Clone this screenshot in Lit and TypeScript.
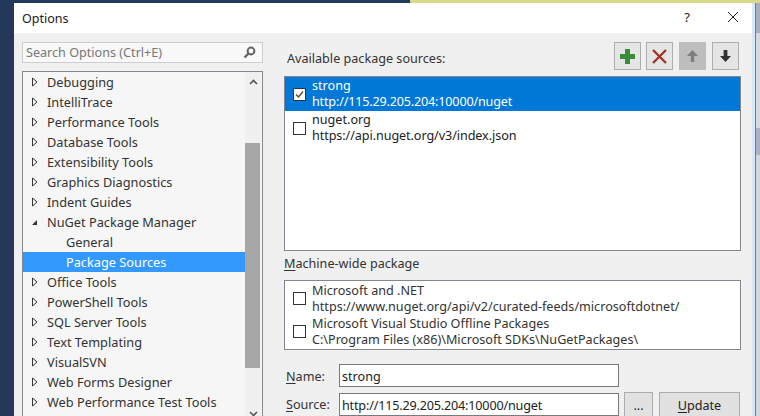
import { LitElement, html, css, svg } from "lit";
import { customElement } from "lit/decorators.js";

const closed = svg`<svg class="arrow" width="7" height="10" viewBox="0 0 7 10"><path d="M1.5 1 L6 5 L1.5 9 Z" fill="#fff" stroke="#333" stroke-width="1"/></svg>`;
const open = svg`<svg class="arrow" width="7" height="10" viewBox="0 0 7 10"><path d="M1 8 L6 8 L6 3 Z" fill="#333"/></svg>`;

const treeItems: [string, number, boolean?][] = [
  ["Debugging", 0], ["IntelliTrace", 0], ["Performance Tools", 0], ["Database Tools", 0],
  ["Extensibility Tools", 0], ["Graphics Diagnostics", 0], ["Indent Guides", 0],
  ["NuGet Package Manager", 1], ["General", 2], ["Package Sources", 2, true],
  ["Office Tools", 0], ["PowerShell Tools", 0], ["SQL Server Tools", 0], ["Text Templating", 0],
  ["VisualSVN", 0], ["Web Forms Designer", 0], ["Web Performance Test Tools", 0],
];

@customElement("app-root")
export class AppRoot extends LitElement {
  static styles = css`
    :host { display: block; width: 760px; height: 416px; overflow: hidden; background: #24385c;
      font: 12.62px "Noto Sans", "Open Sans", sans-serif; color: #333; position: relative; }
    .top { height: 3px; background: linear-gradient(90deg, #1f3a5c 0, #1f3a5c 410px, #d9d98a 410px); }
    .right-edge { position: absolute; left: 755px; top: 3px; width: 5px; height: 413px; box-sizing: border-box; border-left: 1px solid #5f7d9c;
      background: linear-gradient(#a9adc0 0, #a9adc0 30px, #d8d8dc 30px, #d8d8dc 125px, #b0b0c8 125px, #b0b0c8 152px, #d4d6da 152px); }
    .dialog { margin-left: 14px; width: 741px; height: 413px; background: #f0f0f0; overflow: hidden; position: relative; box-sizing: border-box; border-right: 3px solid #d5eaf8; }
    .title { height: 30px; background: #fff; display: flex; align-items: center; padding-left: 8px; font-size: 12.5px; color: #222; }
    .title .t { flex: 1; }
    .help { width: 16px; margin-right: 32px; font-size: 13px; color: #222; text-align: center; padding-bottom: 2px; }
    .close { margin: 0 13px 2px 0; display: block; }
    .body { display: flex; padding: 9px 0 0 8px; }
    .left { width: 241px; flex: none; }
    .search { height: 21px; box-sizing: border-box; border: 1px solid #ccced3; background: #f8f8f8; display: flex; align-items: center; padding: 0 6px 0 3px; color: #777; justify-content: space-between; }
    .tree { margin-top: 8px; height: 360px; box-sizing: border-box; border: 1px solid #828790; background: #f6f6f6; padding: 0 1px 0 0; display: flex; }
    .rows { flex: 1; font-size: 12.75px; }
    .row { height: 20px; display: flex; align-items: center; white-space: nowrap; }
    .row.sel { background: #3399ff; color: #fff; }
    .arrow { margin-left: 8px; flex: none; }
    .indent { width: 43px; flex: none; }
    .tw { width: 9px; flex: none; }
    .sb { width: 16px; flex: none; background: #f0f0f0; display: flex; flex-direction: column; align-items: center; }
    .sb .up { height: 71px; width: 100%; display: flex; justify-content: center; padding-top: 7px; box-sizing: border-box; }
    .sb .thumb { height: 225px; width: 15px; flex: none; background: #a6a6a6; align-self: flex-start; }
    .sb .down { margin-top: 43px; display: block; flex: none; }
    .right { margin-left: 21px; width: 457px; flex: none; }
    .head { display: flex; height: 33px; align-items: center; justify-content: space-between; padding-left: 3px; padding-right: 2px; }
    .head .btns { display: flex; gap: 5px; margin-top: -5px; }
    .tb { width: 27px; height: 28px; box-sizing: border-box; border: 1px solid #adadad; background: #e5e5e5; display: flex; align-items: center; justify-content: center; }
    .tb.dis { background: #bdbdbd; border-color: #bdbdbd; }
    .tb.gap { margin-left: 1px; }
    .list { border: 1px solid #828790; background: #fff; box-sizing: border-box; }
    .list.a { height: 175px; margin-top: 1px; }
    .list.b { height: 70px; padding-top: 1px; }
    .item { display: flex; align-items: center; height: 34px; color: #222; line-height: 16px; white-space: nowrap; }
    .list.b .item { height: 33px; color: #333; }
    .item.sel { background: #0078d7; color: #fff; }
    .cb { width: 13px; height: 13px; box-sizing: border-box; border: 1px solid #333; background: #fff; margin: 0 6px 0 8px; flex: none; display: block; }
    .mw { height: 29px; box-sizing: border-box; padding-bottom: 4px; display: flex; align-items: center; }
    u { text-underline-offset: 2px; }
    .url { letter-spacing: -0.18px; }
    .url2 { letter-spacing: -0.08px; }
    .field { display: flex; align-items: center; padding-left: 2px; }
    .field .lab { width: 53px; }
    .f1 .lab { padding-top: 2px; }
    .input { width: 280px; height: 23px; box-sizing: border-box; border: 1px solid #7a7a7a; background: #fff; padding: 1px 0 0 2px; display: flex; align-items: center; color: #222; }
    .f1 { margin-top: 14px; }
    .f2 { margin-top: 5px; align-items: flex-start; }
    .f2 .lab { margin-top: 4px; }
    .f2 .input { margin-top: 1px; }
    .btn { height: 26px; box-sizing: border-box; border: 1px solid #adadad; background: #e1e1e1; display: flex; align-items: center; justify-content: center; color: #222; }
    .dots { width: 29px; margin-left: 5px; }
    .upd { width: 81px; margin-left: 6px; }
  `;

  render() {
    return html`
      <div class="top"></div>
      <div class="right-edge"></div>
      <div class="dialog">
        <div class="title">
          <span class="t">Options</span>
          <span class="help">?</span>
          <svg class="close" width="12" height="12" viewBox="0 0 12 12"><path d="M1 1 L11 11 M11 1 L1 11" stroke="#222" stroke-width="1"/></svg>
        </div>
        <div class="body">
          <div class="left">
            <div class="search">
              <span>Search Options (Ctrl+E)</span>
              <svg width="13" height="13" viewBox="0 0 13 13"><circle cx="8" cy="5" r="3.4" fill="none" stroke="#666" stroke-width="2"/><path d="M5.5 7.5 L1.5 11.5" stroke="#666" stroke-width="2.4"/></svg>
            </div>
            <div class="tree">
              <div class="rows">
                ${treeItems.map(([t, k, s]) => html`
                  <div class="row ${s ? "sel" : ""}">
                    ${k === 2 ? html`<span class="indent"></span>` : html`${k === 1 ? open : closed}<span class="tw"></span>`}
                    <span>${t}</span>
                  </div>`)}
              </div>
              <div class="sb">
                <div class="up">
                  <svg width="9" height="6" viewBox="0 0 9 6"><path d="M1 5 L4.5 1.5 L8 5" fill="none" stroke="#555" stroke-width="1.6"/></svg>
                </div>
                <div class="thumb"></div>
                <svg class="down" width="9" height="6" viewBox="0 0 9 6"><path d="M1 1 L4.5 4.5 L8 1" fill="none" stroke="#555" stroke-width="1.6"/></svg>
              </div>
            </div>
          </div>
          <div class="right">
            <div class="head">
              <span>Available package sources:</span>
              <div class="btns">
                <div class="tb"><svg width="17" height="17" viewBox="0 0 17 17"><path d="M6 1 H11 V6 H16 V11 H11 V16 H6 V11 H1 V6 H6 Z" fill="#3c8a3c"/></svg></div>
                <div class="tb"><svg width="17" height="15" viewBox="0 0 17 15"><path d="M2 1 L15 14 M15 1 L2 14" stroke="#a1342c" stroke-width="2.4"/></svg></div>
                <div class="tb dis gap"><svg width="13" height="14" viewBox="0 0 13 14"><path d="M6.5 1 L12 7 H8.2 V13 H4.8 V7 H1 Z" fill="#7e7e7e"/></svg></div>
                <div class="tb gap"><svg width="13" height="14" viewBox="0 0 13 14"><path d="M6.5 13 L12 7 H8.4 V1 H4.6 V7 H1 Z" fill="#333"/></svg></div>
              </div>
            </div>
            <div class="list a">
              <div class="item sel">
                <svg class="cb" viewBox="0 0 11 11"><path d="M2 5.5 L4.5 8 L9 2.5" fill="none" stroke="#6b4a2e" stroke-width="1.5"/></svg>
                <div>strong<br><span class="url">http://115.29.205.204:10000/nuget</span></div>
              </div>
              <div class="item">
                <span class="cb"></span>
                <div>nuget.org<br><span class="url2">https://api.nuget.org/v3/index.json</span></div>
              </div>
            </div>
            <div class="mw"><span><u>M</u>achine-wide package</span></div>
            <div class="list b">
              <div class="item">
                <span class="cb"></span>
                <div>Microsoft and .NET<br>https://www.nuget.org/api/v2/curated-feeds/microsoftdotnet/</div>
              </div>
              <div class="item">
                <span class="cb"></span>
                <div>Microsoft Visual Studio Offline Packages<br>C:\\Program Files (x86)\\Microsoft SDKs\\NuGetPackages\\</div>
              </div>
            </div>
            <div class="field f1">
              <span class="lab"><u>N</u>ame:</span>
              <div class="input">strong</div>
            </div>
            <div class="field f2">
              <span class="lab"><u>S</u>ource:</span>
              <div class="input url">http://115.29.205.204:10000/nuget</div>
              <div class="btn dots">...</div>
              <div class="btn upd"><span><u>U</u>pdate</span></div>
            </div>
          </div>
        </div>
      </div>
    `;
  }
}
